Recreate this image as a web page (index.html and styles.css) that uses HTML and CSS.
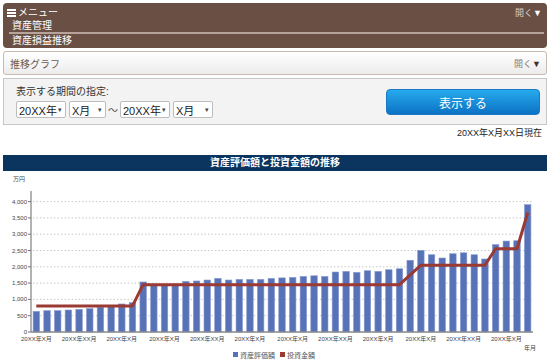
FILE: index.html
```html
<!DOCTYPE html>
<html lang="ja">
<head>
  <meta charset="UTF-8">
  <title>資産損益推移</title>
  <link rel="stylesheet" href="styles.css">
</head>
<body>

  <div class="menu">
    <div class="menu-row">
      <span class="menu-title">
        <svg class="burger" width="9" height="8" viewBox="0 0 9 8">
          <rect x="0" y="0" width="9" height="2" fill="#fff"/>
          <rect x="0" y="3" width="9" height="2" fill="#fff"/>
          <rect x="0" y="6" width="9" height="2" fill="#fff"/>
        </svg>メニュー
      </span>
      <span class="toggle">開く<b>▼</b></span>
    </div>
    <div class="menu-item">資産管理</div>
    <div class="menu-sep"></div>
    <div class="menu-item">資産損益推移</div>
  </div>

  <div class="sub-nav">
    <span>推移グラフ</span>
    <span class="toggle">開く<b>▼</b></span>
  </div>

  <div class="period">
    <div class="period-left">
      <div class="period-label">表示する期間の指定:</div>
      <div class="period-selects">
        <span class="sel sel-year">20XX年<i>▾</i></span>
        <span class="sel sel-month">X月<i>▾</i></span>
        <span class="tilde">〜</span>
        <span class="sel sel-year">20XX年<i>▾</i></span>
        <span class="sel sel-month2">X月<i>▾</i></span>
      </div>
    </div>
    <button class="show-btn">表示する</button>
  </div>

  <div class="as-of">20XX年X月XX日現在</div>

  <div class="chart-title">資産評価額と投資金額の推移</div>
  <svg id="chart" class="chart" width="544" height="191" viewBox="3 169 544 191"></svg>

  <script>
    // 資産評価額（万円）
    const values = [635, 655, 655, 675, 695, 715, 760, 800, 860, 900,
      1535, 1460, 1460, 1470, 1555, 1565, 1595, 1645, 1595, 1615,
      1615, 1615, 1645, 1660, 1675, 1705, 1725, 1705, 1840, 1860,
      1830, 1880, 1860, 1910, 1940, 2200, 2505, 2370, 2270, 2400,
      2430, 2370, 2240, 2680, 2790, 2800, 3905];
    // 投資金額
    const invest = [];
    values.forEach((v, i) => {
      if (i <= 9) invest.push(800);
      else if (i <= 34) invest.push(1450);
      else if (i == 35) invest.push(1750);
      else if (i <= 42) invest.push(2050);
      else if (i <= 45) invest.push(2555);
      else invest.push(3660);
    });

    const svg = document.getElementById("chart");
    const NS = "http://www.w3.org/2000/svg";
    const x0 = 31, x1 = 533, y0 = 330, k = 0.0326;
    const step = (x1 - x0) / values.length;
    const yOf = v => y0 - v * k;

    function add(tag, attrs, text) {
      const el = document.createElementNS(NS, tag);
      for (const a in attrs) el.setAttribute(a, attrs[a]);
      if (text) el.textContent = text;
      svg.appendChild(el);
      return el;
    }

    add("text", { x: 13, y: 179, class: "lbl" }, "万円");

    // 目盛り
    for (let v = 0; v <= 4000; v += 500) {
      const y = yOf(v);
      if (v > 0) add("line", { x1: 33, y1: y, x2: x1, y2: y, class: "grid" });
      add("line", { x1: 28, y1: y, x2: 31, y2: y, class: "tick" });
      add("text", { x: 27, y: y + 2, class: "lbl", "text-anchor": "end" }, v.toLocaleString("en-US"));
    }

    values.forEach((v, i) => {
      add("rect", { x: x0 + step * i + 2.1, y: yOf(v), width: 6.5, height: v * k, class: "bar" });
    });

    add("line", { x1: x0, y1: 189, x2: x0, y2: y0, class: "axis" });
    add("line", { x1: x0, y1: y0, x2: x1, y2: y0, class: "axis-x" });

    const pts = invest.map((v, i) => (x0 + step * (i + 0.5)).toFixed(1) + "," + yOf(v).toFixed(1));
    add("polyline", { points: pts.join(" "), class: "line" });

    const names = ["20XX年X月", "20XX年XX月", "20XX年X月"];
    for (let i = 0; i < 12; i++) {
      add("text", { x: x0 + step * (i * 4 + 0.5), y: 339, class: "lbl", "text-anchor": "middle" }, names[i % 3]);
    }
    add("text", { x: 524, y: 348, class: "lbl" }, "年月");

    // 凡例
    add("rect", { x: 233, y: 350, width: 5, height: 5, fill: "#5872b7" });
    add("text", { x: 240, y: 355.5, class: "legend" }, "資産評価額");
    add("rect", { x: 280, y: 350, width: 5, height: 5, fill: "#9a3a32" });
    add("text", { x: 287, y: 355.5, class: "legend" }, "投資金額");
  </script>

</body>
</html>
```

FILE: styles.css
```css
body {
  margin: 0;
  padding: 3px;
  font-family: "Liberation Sans", "Noto Sans CJK JP", sans-serif;
  background-color: #fff;
  color: #333;
}

.menu {
  background-color: #6a4f44;
  border-radius: 4px;
  color: #fff;
  padding: 4px 5px 1px 4px;
  font-size: 10px;
  line-height: 12px;
}

.menu-row {
  display: flex;
  justify-content: space-between;
}

.menu-title {
  display: flex;
  align-items: center;
}

.burger {
  margin-right: 2px;
}

.toggle {
  font-size: 9px;
  color: #d9ccc6;
}

.toggle b {
  color: #fff;
  font-weight: normal;
  font-size: 9px;
}

.menu-item {
  padding-left: 5px;
  margin-top: 1px;
}

.menu-sep {
  height: 2px;
  background-color: #b8a39a;
  margin: 0 -2px 0 2px;
}

.sub-nav {
  margin-top: 3px;
  height: 22px;
  border: 1px solid #c9b9b0;
  border-radius: 3px;
  background: linear-gradient(#ffffff, #ececec);
  display: flex;
  justify-content: space-between;
  align-items: center;
  padding: 0 5px 0 6px;
  font-size: 10px;
  color: #6b5a50;
}

.sub-nav .toggle {
  color: #8a7a72;
}

.sub-nav .toggle b {
  color: #4a3028;
}

.period {
  margin-top: 3px;
  border: 1px solid #c6c6c6;
  background-color: #f3f3f3;
  padding: 7px 6px 6px 12px;
  display: flex;
  justify-content: space-between;
  align-items: center;
}

.period-label {
  font-size: 10px;
  line-height: 12px;
  color: #333;
  margin-bottom: 3px;
}

.period-selects {
  display: flex;
  align-items: center;
}

.sel {
  display: flex;
  justify-content: space-between;
  align-items: center;
  box-sizing: border-box;
  height: 17px;
  padding: 0 3px 0 2px;
  background-color: #fff;
  border: 1px solid #bdbdbd;
  border-radius: 2px;
  font-size: 11px;
  white-space: nowrap;
  color: #222;
  margin-right: 3px;
}

.sel i {
  font-style: normal;
  font-size: 7px;
  color: #444;
}

.sel-year {
  width: 50px;
}

.sel-month {
  width: 37px;
  margin-right: 0;
}

.sel-month2 {
  width: 40px;
}

.tilde {
  width: 14px;
  text-align: center;
  font-size: 10px;
  color: #555;
}

.show-btn {
  width: 154px;
  height: 26px;
  border: 1px solid #1b78c2;
  border-radius: 4px;
  background: linear-gradient(#27aaed, #0c72c4);
  color: #fff;
  font-family: "Noto Sans CJK JP", sans-serif;
  font-size: 12px;
  cursor: pointer;
}

.as-of {
  text-align: right;
  font-size: 9px;
  line-height: 11px;
  margin-top: 3px;
  padding-right: 5px;
  color: #222;
}

.chart-title {
  margin-top: 16px;
  height: 16px;
  line-height: 16px;
  background-color: #0b345f;
  color: #fff;
  text-align: center;
  font-size: 10px;
  font-weight: bold;
}

.chart {
  display: block;
}

.chart .grid {
  stroke: #c8c8c8;
  stroke-width: 1;
  stroke-dasharray: 1.5 2;
}

.chart .tick {
  stroke: #777;
  stroke-width: 1;
}

.chart .axis {
  stroke: #666;
  stroke-width: 1;
}

.chart .axis-x {
  stroke: #888;
  stroke-width: 1.5;
}

.chart .bar {
  fill: #5872b7;
  stroke: #8a9dd2;
  stroke-width: 0.6;
}

.chart .line {
  fill: none;
  stroke: #9a3a32;
  stroke-width: 3;
  stroke-linejoin: round;
}

.chart .lbl {
  font-size: 6px;
  fill: #444;
}

.chart .legend {
  font-size: 7px;
  fill: #555;
}
```
